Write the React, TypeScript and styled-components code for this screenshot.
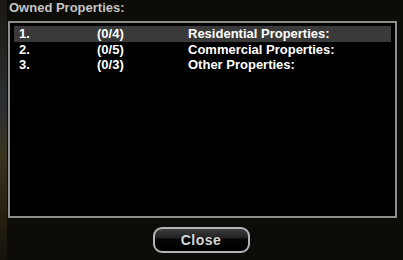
import React from 'react';
import styled, { createGlobalStyle } from 'styled-components';

const GlobalStyle = createGlobalStyle`
  html, body {
    margin: 0;
    padding: 0;
    background: #0e0c09;
  }
  body {
    font-family: "Liberation Sans", Arial, sans-serif;
  }
`;

const Screen = styled.div`
  display: flex;
  width: 403px;
  height: 260px;
  overflow: hidden;
  background: #0e0c09;
`;

const SideStrip = styled.div`
  width: 7px;
  flex-shrink: 0;
  background: linear-gradient(
    180deg,
    #1a1812 0%,
    #22241f 20%,
    #2a2e33 38%,
    #3a3320 60%,
    #2a2212 80%,
    #141109 100%
  );
`;

const Window = styled.div`
  flex: 1;
  display: flex;
  flex-direction: column;
  padding: 0 6px 0 1px;
`;

const Title = styled.div`
  height: 21px;
  line-height: 16px;
  font-size: 13px;
  font-weight: bold;
  color: #c4c4c4;
  padding-left: 1px;
`;

const ListBox = styled.div`
  height: 197px;
  box-sizing: border-box;
  border: 2px solid #8e8e8e;
  background: #000;
  padding: 3px 4px;
`;

const Row = styled.div<{ $selected?: boolean }>`
  display: grid;
  grid-template-columns: 78px 91px 1fr;
  height: 15px;
  line-height: 15px;
  padding-left: 5px;
  font-size: 13px;
  font-weight: bold;
  color: #fff;
  background: ${p => (p.$selected ? '#3a3a3a' : 'transparent')};
  &:first-child {
    height: 16px;
    line-height: 16px;
  }
`;

const Footer = styled.div`
  display: flex;
  justify-content: center;
  padding-top: 9px;
  padding-right: 3px;
`;

const CloseButton = styled.button`
  width: 97px;
  height: 26px;
  box-sizing: border-box;
  border: 2px solid #b4b4b4;
  border-radius: 9px;
  background: linear-gradient(
    180deg,
    #3c3c3c 0%,
    #222 40%,
    #050505 46%,
    #000 100%
  );
  color: #d6d6d6;
  font-family: "Liberation Sans", Arial, sans-serif;
  font-size: 14px;
  font-weight: bold;
  letter-spacing: 0.5px;
  padding: 0;
  cursor: pointer;
`;

const rows = [
  { n: '1.', count: '(0/4)', label: 'Residential Properties:' },
  { n: '2.', count: '(0/5)', label: 'Commercial Properties:' },
  { n: '3.', count: '(0/3)', label: 'Other Properties:' },
];

export default function App() {
  return (
    <>
      <GlobalStyle />
      <Screen>
        <SideStrip />
        <Window>
          <Title>Owned Properties:</Title>
          <ListBox>
            {rows.map((r, i) => (
              <Row key={r.n} $selected={i === 0}>
                <span>{r.n}</span>
                <span>{r.count}</span>
                <span>{r.label}</span>
              </Row>
            ))}
          </ListBox>
          <Footer>
            <CloseButton>Close</CloseButton>
          </Footer>
        </Window>
      </Screen>
    </>
  );
}
